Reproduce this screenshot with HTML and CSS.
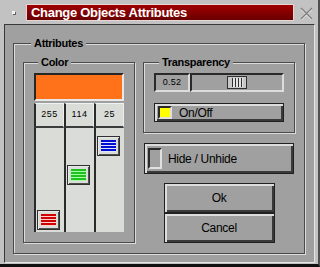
FILE: index.html
```html
<!DOCTYPE html>
<html lang="en">
<head>
    <meta charset="UTF-8">
    <title>Change Objects Attributes</title>
    <link rel="stylesheet" href="styles.css">
</head>
<body>
    <div class="window">
        <div class="titlebar">
            <span class="menu-dot"></span>
            <div class="title">Change Objects Attributes</div>
            <svg class="close" width="13" height="13" viewBox="0 0 13 13">
                <path d="M1.5 2.5 L11.5 12.5 M11.5 2.5 L1.5 12.5" stroke="#f0f0f0" stroke-width="1.2" fill="none"/>
                <path d="M1 1 L12 12 M12 1 L1 12" stroke="#7c7c7c" stroke-width="1.3" fill="none"/>
            </svg>
        </div>

        <div class="client">
            <div class="group attributes">
                <span class="group-label">Attributes</span>
                <div class="attr-body">

                    <!-- Цвет: образец, значения и три ползунка -->
                    <div class="group color">
                        <span class="group-label">Color</span>
                        <div class="swatch" style="background: rgb(255, 114, 25);"></div>
                        <div class="values">
                            <span>255</span>
                            <span>114</span>
                            <span>25</span>
                        </div>
                        <div class="sliders">
                            <div class="vtrack"><div class="vthumb red" style="margin-top: 82px;"></div></div>
                            <div class="vtrack"><div class="vthumb green" style="margin-top: 37px;"></div></div>
                            <div class="vtrack"><div class="vthumb blue" style="margin-top: 8px;"></div></div>
                        </div>
                    </div>

                    <div class="right-col">
                        <div class="group transparency">
                            <span class="group-label">Transparency</span>
                            <div class="hslider">
                                <div class="hvalue">0.52</div>
                                <div class="htrack"><div class="hthumb" style="margin-left: 35px;"></div></div>
                            </div>
                            <button class="btn toggle on-off">
                                <span class="indicator yellow"></span>
                                On/Off
                            </button>
                        </div>

                        <button class="btn toggle hide">
                            <span class="indicator"></span>
                            Hide / Unhide
                        </button>

                        <div class="actions">
                            <button class="btn action">Ok</button>
                            <button class="btn action">Cancel</button>
                        </div>
                    </div>

                </div>
            </div>
        </div>
    </div>
</body>
</html>
```

FILE: styles.css
```css
body {
    margin: 0;
    background-color: #000;
    font-family: "Liberation Sans", Arial, sans-serif;
}

.window {
    width: 320px;
    height: 267px;
    box-sizing: border-box;
    background-color: #c2c2c2;
    border-right: 2px solid #505050;
    border-bottom: 3px solid #101010;
}

.titlebar {
    height: 24px;
    display: flex;
    align-items: flex-start;
}

.menu-dot {
    width: 3px;
    height: 3px;
    margin: 11px 0 0 12px;
    background-color: #f4f4f4;
    box-shadow: 1px 1px 0 #606060;
}

.title {
    width: 268px;
    height: 17px;
    box-sizing: border-box;
    margin: 4px 0 0 11px;
    padding-left: 4px;
    border: 1px solid #e6d6d6;
    background: linear-gradient(#a00000, #6a0000);
    color: #fff;
    font-size: 13px;
    font-weight: bold;
    line-height: 15px;
    letter-spacing: -0.3px;
    white-space: nowrap;
}

.close {
    margin: 7px 0 0 6px;
}

.client {
    width: 311px;
    height: 239px;
    box-sizing: border-box;
    margin-left: 4px;
    padding: 18px 0 0 8px;
    background-color: #a0a0a0;
    border: 1px solid;
    border-color: #383838 #e4e4e4 #e4e4e4 #383838;
}

/* рамки групп */
.group {
    display: flex;
    flex-direction: column;
    box-sizing: border-box;
    border: 1px solid #4a4a4a;
    box-shadow: inset 1px 1px 0 #dcdcdc, 1px 1px 0 #dcdcdc;
}

.group-label {
    align-self: flex-start;
    height: 13px;
    margin-top: -7px;
    padding: 0 3px;
    background-color: #a0a0a0;
    font-size: 11px;
    font-weight: bold;
    line-height: 13px;
    letter-spacing: -0.3px;
    color: #000;
}

.attributes {
    width: 292px;
    height: 211px;
    padding: 0 8px 0 9px;
}

.attributes > .group-label {
    margin-left: 8px;
}

.attr-body {
    display: flex;
    gap: 8px;
    margin-top: 12px;
}

.color {
    width: 112px;
    height: 181px;
    padding: 0 10px;
}

.color > .group-label {
    margin-left: 4px;
    margin-bottom: 4px;
}

.transparency > .group-label {
    margin-left: 5px;
    margin-bottom: 4px;
}

.swatch {
    height: 28px;
    box-sizing: border-box;
    border: 2px solid;
    border-color: #262626 #e8e8e8 #e8e8e8 #262626;
}

.values {
    display: grid;
    grid-template-columns: repeat(3, 30px);
    margin-top: 2px;
}

.values span {
    height: 25px;
    box-sizing: border-box;
    border-left: 2px solid #2a2a2a;
    border-top: 1px solid #f2f2f2;
    border-right: 1px solid #eeeeee;
    border-bottom: 2px solid #3c3c3c;
    background-color: #dadcd8;
    font-size: 9px;
    line-height: 21px;
    text-align: center;
    letter-spacing: 0.5px;
}

.sliders {
    display: grid;
    grid-template-columns: repeat(3, 30px);
    height: 104px;
}

.vtrack {
    border-left: 2px solid #2a2a2a;
    background-color: #dadcd8;
}

.vthumb {
    width: 23px;
    height: 20px;
    box-sizing: border-box;
    margin-left: 1px;
    border: 1px solid #303030;
    box-shadow: inset 1px 1px 0 #e8e8e8, inset -1px -1px 0 #505050;
    padding: 3px;
    background-color: #a0a0a0;
    background-clip: content-box;
}

.vthumb.red {
    background-image: repeating-linear-gradient(#d00000 0 2px, #ffd0d0 2px 3px);
}

.vthumb.green {
    background-image: repeating-linear-gradient(#20c020 0 2px, #a0ffa0 2px 3px);
}

.vthumb.blue {
    background-image: repeating-linear-gradient(#0010d0 0 2px, #e0e0ff 2px 3px);
}

.right-col {
    display: flex;
    flex-direction: column;
}

.transparency {
    width: 152px;
    height: 71px;
    padding: 0 10px;
}

.hslider {
    display: flex;
    height: 19px;
}

.hvalue {
    width: 36px;
    box-sizing: border-box;
    border: 2px solid;
    border-color: #2a2a2a #dcdcdc #dcdcdc #2a2a2a;
    font-size: 9px;
    line-height: 15px;
    text-align: center;
    letter-spacing: 0.3px;
}

.htrack {
    flex: 1;
    box-sizing: border-box;
    border: 2px solid;
    border-color: #2a2a2a #dcdcdc #dcdcdc #2a2a2a;
    padding-top: 1px;
}

.hthumb {
    width: 20px;
    height: 13px;
    box-sizing: border-box;
    border: 1px solid #303030;
    background-color: #c8c8c8;
    background-image: repeating-linear-gradient(90deg, #303030 0 1px, #e4e4e4 1px 3px);
    background-size: 11px 9px;
    background-position: center;
    background-repeat: no-repeat;
}

/* кнопки */
.btn {
    display: flex;
    align-items: center;
    box-sizing: border-box;
    margin: 0;
    padding: 0;
    border: 1px solid #202020;
    background-color: #a0a0a0;
    box-shadow: inset 2px 2px 0 #dcdcdc, inset -2px -2px 0 #3a3a3a;
    font-family: "Liberation Sans", Arial, sans-serif;
    font-size: 11px;
    letter-spacing: -0.3px;
    color: #000;
}

.toggle .indicator {
    box-sizing: border-box;
    border: 2px solid;
    border-color: #2a2a2a #e0e0e0 #e0e0e0 #2a2a2a;
    background-color: #a0a0a0;
}

.on-off {
    height: 19px;
    margin-top: 11px;
    padding-left: 3px;
    font-size: 12px;
}

.on-off .indicator {
    width: 14px;
    height: 13px;
    margin-right: 7px;
}

.indicator.yellow {
    background-color: #ffff00;
}

.hide {
    width: 150px;
    height: 31px;
    margin: 10px 0 0 1px;
    padding-left: 3px;
    font-size: 12px;
}

.hide .indicator {
    width: 14px;
    height: 21px;
    margin-right: 6px;
}

.actions {
    display: flex;
    flex-direction: column;
    align-items: center;
    margin-top: 9px;
}

.action {
    justify-content: center;
    width: 111px;
    height: 30px;
    font-size: 12px;
}
```
